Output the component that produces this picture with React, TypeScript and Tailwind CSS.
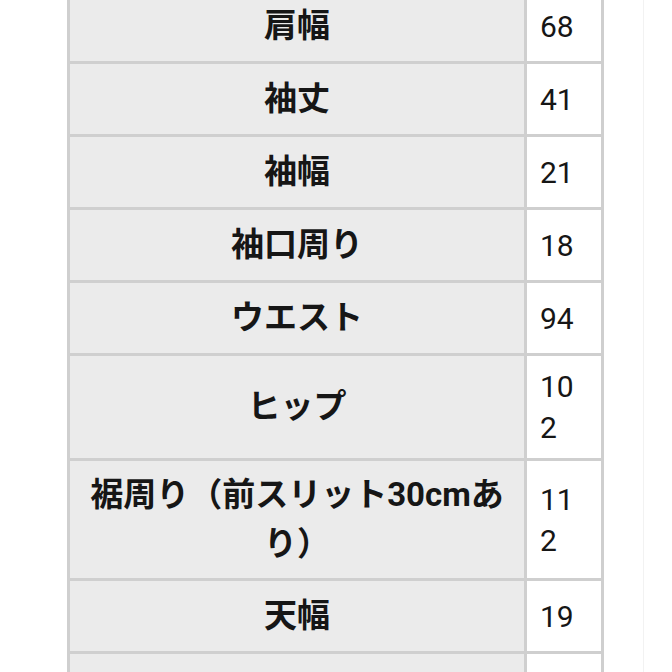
import React from "react";

type Row = { label: string; value: string };

const rows: Row[] = [
    { label: "肩幅", value: "68" },
    { label: "袖丈", value: "41" },
    { label: "袖幅", value: "21" },
    { label: "袖口周り", value: "18" },
    { label: "ウエスト", value: "94" },
    { label: "ヒップ", value: "102" },
    { label: "裾周り（前スリット30cmあり）", value: "112" },
    { label: "天幅", value: "19" },
    { label: "", value: "" },
];

const SizeRow = ({ label, value }: Row) => (
    <div className="flex min-h-[73px] border-b-[3px] border-[#cfcfcf]">
        <div className="w-[457px] shrink-0 flex items-center justify-center bg-[#ebebeb] border-r-[3px] border-[#cfcfcf] px-[12px] py-[10px]">
            <div className="text-center text-[33px] leading-[48.5px] font-bold text-[#161616]">{label}</div>
        </div>
        <div className="w-[74px] shrink-0 flex items-center bg-white pl-[13px] pr-[13px] py-[10px]">
            <div className="text-[30px] leading-[41px] text-[#161616] break-all">{value}</div>
        </div>
    </div>
);

export default function App() {
    return (
        <div
            className="w-[672px] h-[672px] overflow-hidden bg-white flex"
            style={{ fontFamily: 'Roboto, "Noto Sans CJK JP", sans-serif' }}
        >
            <div className="ml-[67px] w-[537px] shrink-0 -mt-[9px] border-l-[3px] border-r-[3px] border-[#cfcfcf] self-start">
                {rows.map((r, i) => (
                    <SizeRow key={i} label={r.label} value={r.value} />
                ))}
            </div>
            <div className="ml-[39px] w-px self-stretch bg-[#f2f2f2]" />
        </div>
    );
}
